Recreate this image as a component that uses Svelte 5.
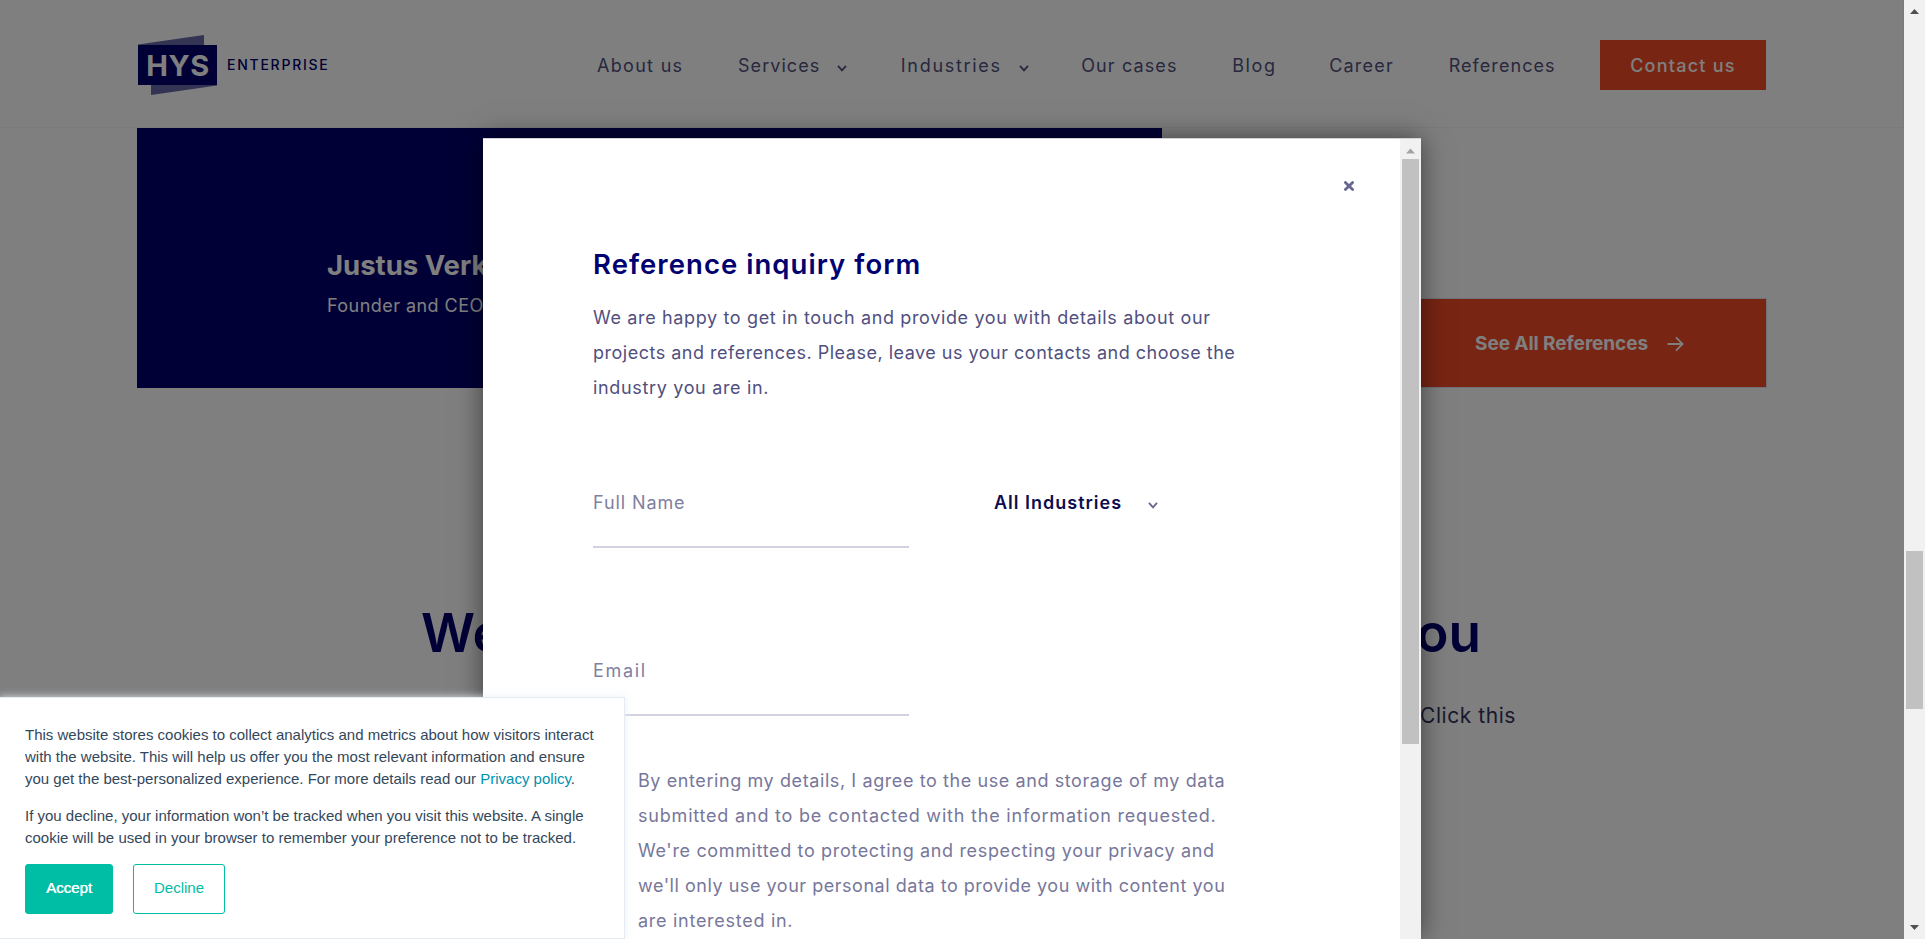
<script>
  const nav = [
    { label: 'About us', spacing: 1.3 },
    { label: 'Services', spacing: 1.05, menu: true },
    { label: 'Industries', spacing: 1.7, menu: true },
    { label: 'Our cases', spacing: 1.12 },
    { label: 'Blog', spacing: 1.6 },
    { label: 'Career', spacing: 1.2 },
    { label: 'References', spacing: 1.06 }
  ];

  const intro = [
    { text: 'We are happy to get in touch and provide you with details about our', spacing: 0.64 },
    { text: 'projects and references. Please, leave us your contacts and choose the', spacing: 0.5 },
    { text: 'industry you are in.', spacing: 0.66 }
  ];

  const consent = [
    { text: 'By entering my details, I agree to the use and storage of my data', spacing: 0.59 },
    { text: 'submitted and to be contacted with the information requested.', spacing: 0.8 },
    { text: "We're committed to protecting and respecting your privacy and", spacing: 0.65 },
    { text: "we'll only use your personal data to provide you with content you", spacing: 0.53 },
    { text: 'are interested in.', spacing: 0.72 }
  ];
</script>

{#snippet chevron()}
  <svg class="chevron" width="10" height="7" viewBox="0 0 10 7" aria-hidden="true">
    <path d="M1 .9 5 5.4 9 .9" fill="none" stroke="currentColor" stroke-width="1.8" />
  </svg>
{/snippet}

<div class="page">
  <div class="site">
    <header>
      <a class="logo" href="#home">
        <span class="mark">
          <svg width="80" height="62" viewBox="0 0 80 62" aria-hidden="true">
            <path d="M1 10.6 67 .9V11H1zM14 50h66v1.4L14 61z" fill="#6666a8" />
          </svg>
          <b>HYS</b>
        </span>
        <span class="enterprise">ENTERPRISE</span>
      </a>
      <nav>
        {#each nav as item}
          <a href="#nav" style:letter-spacing="{item.spacing}px">
            {item.label}{#if item.menu}{@render chevron()}{/if}
          </a>
        {/each}
      </nav>
      <a class="contact" href="#contact">Contact us</a>
    </header>

    <section class="references">
      <div class="person">
        <h3>Justus Verk</h3>
        <p>Founder and CEO</p>
      </div>
      <a class="all" href="#references">
        See All References
        <svg width="17" height="16" viewBox="0 0 17 16" aria-hidden="true">
          <path d="M.5 8H15.5M9 1.4 15.6 8 9 14.6" fill="none" stroke="#fff" stroke-width="1.8" />
        </svg>
      </a>
    </section>

    <section class="paper">
      <h2><span>We</span><span>you</span></h2>
      <p>Click this</p>
    </section>
  </div>

  <div class="overlay"></div>

  <div class="modal">
    <div class="body">
      <button class="close" aria-label="Close">
        <svg width="12" height="12" viewBox="0 0 12 12" aria-hidden="true">
          <path d="M2.4 2.4l7.2 7.2M9.6 2.4l-7.2 7.2" stroke="#66668f" stroke-width="2.8" stroke-linecap="round" />
        </svg>
      </button>
      <h2>Reference inquiry form</h2>
      <p class="intro">
        {#each intro as line}<span style:letter-spacing="{line.spacing}px">{line.text}</span>{/each}
      </p>
      <div class="fields">
        <div class="field name">Full Name</div>
        <div class="select">All Industries {@render chevron()}</div>
        <div class="field email">Email</div>
      </div>
      <p class="consent">
        {#each consent as line}<span style:letter-spacing="{line.spacing}px">{line.text}</span>{/each}
      </p>
    </div>
    <div class="bar inner">
      <svg width="9" height="6" viewBox="0 0 9 6" aria-hidden="true"><path d="M0 5.5 4.5.5 9 5.5z" fill="#a3a3a3" /></svg>
      <div class="thumb"></div>
    </div>
  </div>

  <div class="cookies">
    <p>
      This website stores cookies to collect analytics and metrics about how visitors interact<br />with the website. This
      will help us offer you the most relevant information and ensure<br />you get the best-personalized experience. For
      more details read our <a href="#privacy">Privacy policy</a>.
    </p>
    <p>
      If you decline, your information won’t be tracked when you visit this website. A single<br />cookie will be used in
      your browser to remember your preference not to be tracked.
    </p>
    <div class="actions">
      <button class="accept">Accept</button>
      <button class="decline">Decline</button>
    </div>
  </div>

  <div class="bar outer">
    <svg width="9" height="5" viewBox="0 0 9 5" aria-hidden="true"><path d="M0 5 4.5 0 9 5z" fill="#505050" /></svg>
    <div class="thumb"></div>
    <svg width="9" height="5" viewBox="0 0 9 5" aria-hidden="true"><path d="M0 0h9L4.5 5z" fill="#505050" /></svg>
  </div>
</div>

<style>
  :global(body) {
    margin: 0;
    overflow: hidden;
  }
  .page,
  .page * {
    box-sizing: border-box;
  }
  .page {
    position: relative;
    width: 1925px;
    height: 939px;
    overflow: hidden;
    background: #fff;
    font-family: Inter, sans-serif;
    font-size: 18px;
  }
  h2,
  h3,
  p {
    margin: 0;
  }
  a {
    color: inherit;
    text-decoration: none;
  }
  button {
    padding: 0;
    border: 0;
    background: none;
    font: inherit;
  }
  .site {
    width: 1904px;
    height: 939px;
  }
  header {
    display: flex;
    align-items: flex-start;
    height: 128px;
    padding: 34px 0 0 137px;
    border-right: 1px solid #f4f4f7;
    border-bottom: 1px solid #f4f4f7;
  }
  .logo {
    display: flex;
    width: 460px;
    color: #00006c;
  }
  .mark {
    display: grid;
    width: 80px;
    height: 62px;
  }
  .mark > * {
    grid-area: 1 / 1;
  }
  .mark b {
    width: 79px;
    height: 40px;
    margin: 11px 0 0 1px;
    padding-left: 1px;
    background: #00006c;
    color: #fff;
    font-size: 29px;
    line-height: 41px;
    letter-spacing: 0.6px;
    text-align: center;
  }
  .enterprise {
    margin: 20px 0 0 10px;
    font-size: 14px;
    font-weight: 500;
    line-height: 22px;
    letter-spacing: 1.75px;
  }
  nav {
    display: grid;
    grid-template-columns: 141px 162.8px 180.4px 151px 97px 119.5px 151.3px;
    margin-top: 6px;
    color: #50507c;
    line-height: 51px;
  }
  nav .chevron {
    margin-left: 17px;
  }
  .contact {
    width: 166px;
    height: 50px;
    margin-top: 6px;
    background: #f04a28;
    color: #fff;
    font-weight: 500;
    line-height: 51px;
    letter-spacing: 1.25px;
    text-align: center;
  }
  .references {
    display: flex;
    align-items: flex-end;
    justify-content: space-between;
    height: 260px;
    margin: 0 137px;
  }
  .person {
    width: 1025px;
    height: 260px;
    padding: 117px 0 0 190px;
    background: #00006c;
    color: #fff;
  }
  .person h3 {
    font-size: 27.5px;
    line-height: 40px;
  }
  .person p {
    line-height: 41px;
    letter-spacing: 0.45px;
  }
  .all {
    display: flex;
    align-items: center;
    gap: 19px;
    width: 480px;
    height: 90px;
    padding: 1px 0 0 187px;
    border: 1px solid #dfe3eb;
    background: #f04a28;
    color: #fff;
    font-size: 19px;
    font-weight: 700;
    letter-spacing: -0.06px;
  }
  .paper {
    padding: 203px 423px 0 421px;
  }
  .paper h2 {
    display: flex;
    justify-content: space-between;
    color: #00006c;
    font-size: 53px;
    font-weight: 600;
    line-height: 84px;
  }
  .paper p {
    padding: 21px 0 0 999px;
    color: #33335c;
    font-size: 21px;
    line-height: 40px;
    letter-spacing: 0.55px;
    white-space: nowrap;
  }
  .overlay {
    position: absolute;
    inset: 0 21px 0 0;
    background: rgba(0, 0, 0, 0.5);
  }
  .modal {
    position: absolute;
    top: 138px;
    left: 483px;
    display: flex;
    width: 938px;
    height: 801px;
    border-top: 1px solid #d2d0d4;
    background: #fff;
    box-shadow: 0 0 25px rgba(0, 0, 0, 0.5);
  }
  .body {
    display: flex;
    flex: 1;
    flex-direction: column;
    padding: 41px 0 0 110px;
  }
  .close {
    align-self: flex-end;
    width: 12px;
    height: 12px;
    margin-right: 45px;
  }
  .close svg {
    display: block;
  }
  .modal h2 {
    margin-top: 52px;
    color: #000070;
    font-size: 27.5px;
    font-weight: 600;
    line-height: 40px;
    letter-spacing: 1.05px;
  }
  .intro span,
  .consent span {
    display: block;
    white-space: nowrap;
  }
  .intro {
    margin-top: 16px;
    color: #50507f;
    line-height: 35px;
  }
  .fields {
    display: grid;
    grid-template-columns: 316px 1fr;
    grid-template-rows: 90px 78px;
    row-gap: 78px;
    column-gap: 85px;
    margin-top: 78px;
    line-height: 40px;
  }
  .field {
    height: 65px;
    border-bottom: 2px solid #d3d3df;
    color: #80809f;
  }
  .name {
    letter-spacing: 0.9px;
  }
  .email {
    letter-spacing: 1.7px;
  }
  .select {
    color: #0d0d50;
    font-weight: 600;
    letter-spacing: 1px;
  }
  .select .chevron {
    margin-left: 20px;
    color: #66668f;
  }
  .consent {
    margin-top: 34px;
    margin-left: 45px;
    color: #77779b;
    line-height: 35px;
  }
  .bar {
    display: flex;
    flex-direction: column;
    align-items: center;
    width: 21px;
    background: #f1f1f1;
  }
  .thumb {
    width: 17px;
    background: #c1c1c1;
  }
  .inner {
    padding-top: 9px;
  }
  .inner .thumb {
    height: 585px;
    margin-top: 5px;
  }
  .outer {
    position: absolute;
    inset: 0 0 0 auto;
    padding-top: 9px;
  }
  .outer .thumb {
    height: 158px;
    margin: 537px 0 216px;
  }
  .cookies {
    position: absolute;
    top: 697px;
    left: -1px;
    width: 626px;
    height: 242px;
    padding: 26px 0 0 25px;
    border: 1px solid #e5ebf3;
    background: #fff;
    box-shadow: 0 0 8px rgba(234, 240, 246, 0.9);
    color: #33475b;
    font-family: 'Liberation Sans', sans-serif;
    font-size: 15px;
    line-height: 22.2px;
    white-space: nowrap;
  }
  .cookies p + p {
    margin-top: 14.5px;
  }
  .cookies a {
    color: #0091ae;
  }
  .actions {
    display: flex;
    gap: 20px;
    margin-top: 14px;
  }
  .actions button {
    height: 50px;
    border: 1px solid #00bda5;
    border-radius: 3px;
  }
  .accept {
    width: 88px;
    background: #00bda5;
    color: #fff;
    text-shadow: 0.4px 0 #fff;
  }
  .decline {
    width: 92px;
    color: #00bda5;
  }
</style>
